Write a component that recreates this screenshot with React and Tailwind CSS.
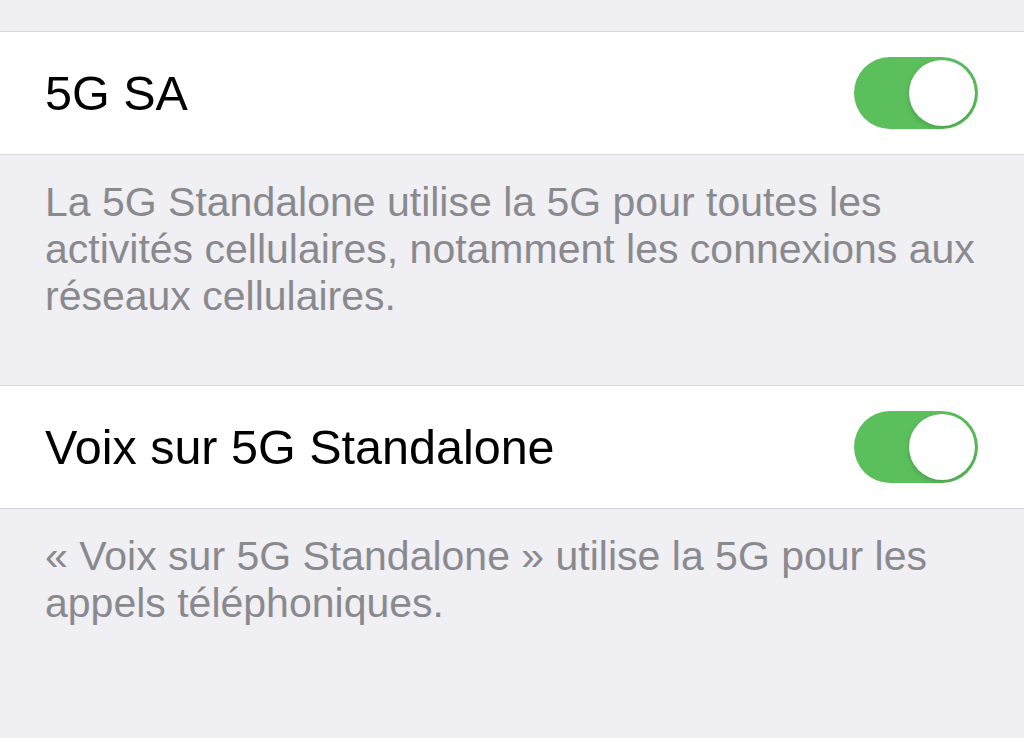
const settings = [
  {
    label: '5G SA',
    footer: [
      'La 5G Standalone utilise la 5G pour toutes les',
      'activités cellulaires, notamment les connexions aux',
      'réseaux cellulaires.',
    ],
    footerClass: 'pb-[65px]',
  },
  {
    label: 'Voix sur 5G Standalone',
    footer: [
      '« Voix sur 5G Standalone » utilise la 5G pour les',
      'appels téléphoniques.',
    ],
    footerClass: 'pb-[60px]',
  },
];

const Toggle = () => (
  <div className="flex h-[72px] w-[124px] items-center justify-end rounded-full bg-[#5bbf5c] p-[3px]">
    <div className="h-[66px] w-[66px] rounded-full bg-white shadow-[0_2px_5px_rgba(0,0,0,0.18)]" />
  </div>
);

const App = () => {
  return (
    <div className="min-h-[738px] w-full overflow-hidden bg-[#efeff4] font-['Liberation_Sans',Arial,sans-serif]">
      <div className="h-[31px]" />

      {settings.map((item) => (
        <section key={item.label}>
          <div className="flex h-[124px] items-center justify-between border-y border-[#d6d6da] bg-white pl-[45px] pr-[46px]">
            <span className="text-[48.5px] leading-none text-black">{item.label}</span>
            <Toggle />
          </div>
          <div className={`pl-[45px] pt-[24px] text-[41px] leading-[47px] text-[#8a8a8e] ${item.footerClass}`}>
            {item.footer.map((line) => (
              <div key={line} className="whitespace-nowrap">
                {line}
              </div>
            ))}
          </div>
        </section>
      ))}
    </div>
  );
};

export default App;
